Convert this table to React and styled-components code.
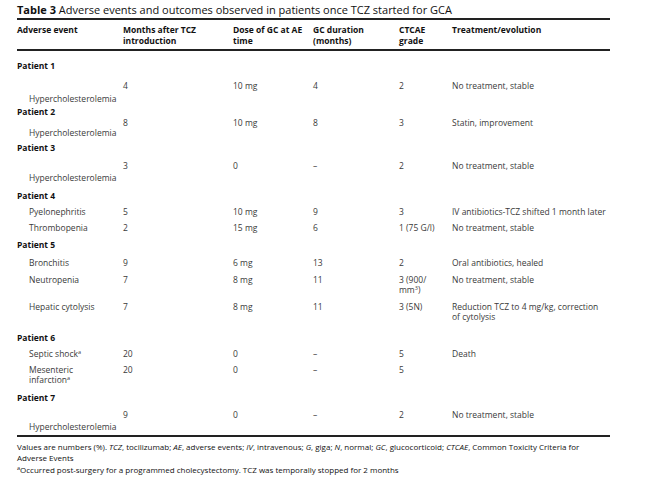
import React from "react";
import styled, { createGlobalStyle } from "styled-components";

const Global = createGlobalStyle`
  html, body { margin: 0; padding: 0; background: #fff; }
  body { font-family: "Open Sans", "Liberation Sans", sans-serif; }
`;

const Page = styled.div`
  width: 650px;
  height: 482px;
  box-sizing: border-box;
  padding: 4px 0 0 17px;
  background: #fff;
  overflow: hidden;
`;

const Title = styled.div`
  font-size: 11px;
  line-height: 12px;
  color: #111;
  white-space: nowrap;
  b { font-weight: 700; }
`;

const Table = styled.div`
  width: 593px;
  margin-top: 2px;
  border-top: 2px solid #222;
`;

const cols = "106px 110px 80px 86px 53px 1fr";

const HeadRow = styled.div`
  display: grid;
  grid-template-columns: ${cols};
  padding: 4px 0 3px;
  border-bottom: 2px solid #222;
  font-size: 8.5px;
  line-height: 11px;
  font-weight: 700;
  color: #111;
`;

const Body = styled.div`
  display: flex;
  flex-direction: column;
  font-size: 8.5px;
  line-height: 10px;
  color: #3a3a3a;
`;

const PatientRow = styled.div`
  margin-top: ${(p) => p.$mt}px;
  font-weight: 700;
  color: #111;
`;

const Row = styled.div`
  display: grid;
  grid-template-columns: ${cols};
  margin-top: ${(p) => p.$mt}px;
`;

const Cell = styled.div`
  white-space: nowrap;
`;

const EventCell = styled.div`
  white-space: nowrap;
  padding-left: 12px;
  padding-top: ${(p) => p.$drop || 0}px;
`;

const Foot = styled.div`
  width: 593px;
  margin-top: 3px;
  border-top: 2px solid #222;
  padding-top: 4px;
  font-size: 8px;
  line-height: 11px;
  color: #111;
  i { font-style: italic; }
`;

const FootNote = styled.div`
  margin-top: 1px;
`;

const Sup = styled.sup`
  font-size: 5.5px;
  line-height: 0;
  vertical-align: 3px;
`;

export default function App() {
  return (
    <Page>
      <Global />
      <Title>
        <b>Table 3</b> Adverse events and outcomes observed in patients once TCZ started for GCA
      </Title>
      <Table>
        <HeadRow>
          <Cell>Adverse event</Cell>
          <Cell>Months after TCZ<br />introduction</Cell>
          <Cell>Dose of GC at AE<br />time</Cell>
          <Cell>GC duration<br />(months)</Cell>
          <Cell>CTCAE<br />grade</Cell>
          <Cell>Treatment/evolution</Cell>
        </HeadRow>
        <Body>
          <PatientRow $mt={10}>Patient 1</PatientRow>
          <Row $mt={10}>
            <EventCell $drop={13}>Hypercholesterolemia</EventCell>
            <Cell>4</Cell>
            <Cell>10 mg</Cell>
            <Cell>4</Cell>
            <Cell>2</Cell>
            <Cell>No treatment, stable</Cell>
          </Row>
          <PatientRow $mt={3}>Patient 2</PatientRow>
          <Row $mt={1}>
            <EventCell $drop={10}>Hypercholesterolemia</EventCell>
            <Cell>8</Cell>
            <Cell>10 mg</Cell>
            <Cell>8</Cell>
            <Cell>3</Cell>
            <Cell>Statin, improvement</Cell>
          </Row>
          <PatientRow $mt={5}>Patient 3</PatientRow>
          <Row $mt={8}>
            <EventCell $drop={12}>Hypercholesterolemia</EventCell>
            <Cell>3</Cell>
            <Cell>0</Cell>
            <Cell>–</Cell>
            <Cell>2</Cell>
            <Cell>No treatment, stable</Cell>
          </Row>
          <PatientRow $mt={8}>Patient 4</PatientRow>
          <Row $mt={6}>
            <EventCell>Pyelonephritis</EventCell>
            <Cell>5</Cell>
            <Cell>10 mg</Cell>
            <Cell>9</Cell>
            <Cell>3</Cell>
            <Cell>IV antibiotics-TCZ shifted 1 month later</Cell>
          </Row>
          <Row $mt={6}>
            <EventCell>Thrombopenia</EventCell>
            <Cell>2</Cell>
            <Cell>15 mg</Cell>
            <Cell>6</Cell>
            <Cell>1 (75 G/l)</Cell>
            <Cell>No treatment, stable</Cell>
          </Row>
          <PatientRow $mt={7}>Patient 5</PatientRow>
          <Row $mt={8}>
            <EventCell>Bronchitis</EventCell>
            <Cell>9</Cell>
            <Cell>6 mg</Cell>
            <Cell>13</Cell>
            <Cell>2</Cell>
            <Cell>Oral antibiotics, healed</Cell>
          </Row>
          <Row $mt={7}>
            <EventCell>Neutropenia</EventCell>
            <Cell>7</Cell>
            <Cell>8 mg</Cell>
            <Cell>11</Cell>
            <Cell>3 (900/<br />mm<Sup>3</Sup>)</Cell>
            <Cell>No treatment, stable</Cell>
          </Row>
          <Row $mt={7}>
            <EventCell>Hepatic cytolysis</EventCell>
            <Cell>7</Cell>
            <Cell>8 mg</Cell>
            <Cell>11</Cell>
            <Cell>3 (5N)</Cell>
            <Cell>Reduction TCZ to 4 mg/kg, correction<br />of cytolysis</Cell>
          </Row>
          <PatientRow $mt={11}>Patient 6</PatientRow>
          <Row $mt={6}>
            <EventCell>Septic shock<Sup>a</Sup></EventCell>
            <Cell>20</Cell>
            <Cell>0</Cell>
            <Cell>–</Cell>
            <Cell>5</Cell>
            <Cell>Death</Cell>
          </Row>
          <Row $mt={6}>
            <EventCell>Mesenteric<br />infarction<Sup>a</Sup></EventCell>
            <Cell>20</Cell>
            <Cell>0</Cell>
            <Cell>–</Cell>
            <Cell>5</Cell>
            <Cell></Cell>
          </Row>
          <PatientRow $mt={8}>Patient 7</PatientRow>
          <Row $mt={7}>
            <EventCell $drop={12}>Hypercholesterolemia</EventCell>
            <Cell>9</Cell>
            <Cell>0</Cell>
            <Cell>–</Cell>
            <Cell>2</Cell>
            <Cell>No treatment, stable</Cell>
          </Row>
        </Body>
      </Table>
      <Foot>
        <div>
          Values are numbers (%). <i>TCZ</i>, tocilizumab; <i>AE</i>, adverse events; <i>IV</i>, intravenous; <i>G</i>, giga; <i>N</i>, normal; <i>GC</i>, glucocorticoid; <i>CTCAE</i>, Common Toxicity Criteria for
          <br />Adverse Events
        </div>
        <FootNote>
          <Sup>a</Sup>Occurred post-surgery for a programmed cholecystectomy. TCZ was temporally stopped for 2 months
        </FootNote>
      </Foot>
    </Page>
  );
}
